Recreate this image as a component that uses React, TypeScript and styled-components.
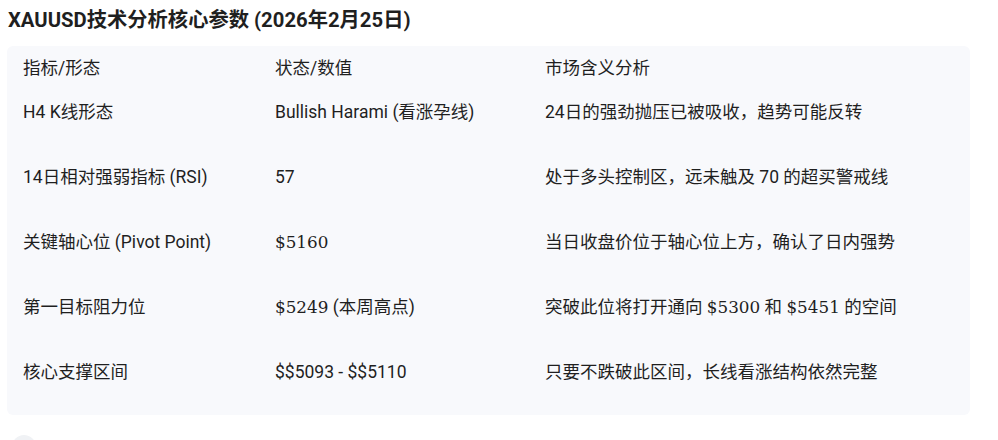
import React from 'react';
import styled, { createGlobalStyle } from 'styled-components';

const GlobalStyle = createGlobalStyle`
  html, body {
    margin: 0;
    padding: 0;
    background: #ffffff;
  }
  body {
    font-family: Roboto, "Noto Sans CJK SC", sans-serif;
    color: #1f1f1f;
  }
`;

const Page = styled.div`
  padding: 7px 28px 0 7px;
`;

const Title = styled.h3`
  margin: 0 0 0 1px;
  font-size: 20.3px;
  line-height: 26px;
  font-weight: 700;
  color: #1f1f1f;
`;

const Panel = styled.div`
  margin-top: 13px;
  background: #f8f9fc;
  border-radius: 6px;
  overflow: hidden;
`;

const Table = styled.table`
  width: 100%;
  border-collapse: collapse;
  table-layout: fixed;
`;

const Col = styled.col<{ w: number }>`
  width: ${({ w }) => w}px;
`;

const HeadCell = styled.th`
  text-align: left;
  font-weight: 400;
  font-size: 17.5px;
  line-height: 20px;
  padding: 12px 16px;
  vertical-align: top;
`;

const Cell = styled.td`
  font-size: 17.5px;
  line-height: 20px;
  padding: 12px 16px 33px;
  vertical-align: top;
`;

// dollar amounts come out of the math renderer in a serif face
const MathText = styled.span`
  && {
    font-family: "DejaVu Serif", "Liberation Serif", serif;
    font-size: 16.8px;
  }
`;

const Peek = styled.div`
  margin: 20px 0 0 5px;
  width: 24px;
  height: 12px;
  border-radius: 12px 12px 0 0;
  background: #f0f2f5;
`;

const rows: React.ReactNode[][] = [
  ['H4 K线形态', 'Bullish Harami (看涨孕线)', '24日的强劲抛压已被吸收，趋势可能反转'],
  ['14日相对强弱指标 (RSI)', '57', '处于多头控制区，远未触及 70 的超买警戒线'],
  ['关键轴心位 (Pivot Point)', <MathText>$5160</MathText>, '当日收盘价位于轴心位上方，确认了日内强势'],
  [
    '第一目标阻力位',
    <>
      <MathText>$5249</MathText> (本周高点)
    </>,
    <>
      突破此位将打开通向 <MathText>$5300</MathText> 和 <MathText>$5451</MathText> 的空间
    </>,
  ],
  ['核心支撑区间', '$$5093 - $$5110', '只要不跌破此区间，长线看涨结构依然完整'],
];

export default function App() {
  return (
    <Page>
      <GlobalStyle />
      <Title>XAUUSD技术分析核心参数 (2026年2月25日)</Title>
      <Panel>
        <Table>
          <colgroup>
            <Col w={252} />
            <Col w={270} />
            <Col w={441} />
          </colgroup>
          <thead>
            <tr>
              <HeadCell>指标/形态</HeadCell>
              <HeadCell>状态/数值</HeadCell>
              <HeadCell>市场含义分析</HeadCell>
            </tr>
          </thead>
          <tbody>
            {rows.map((r, i) => (
              <tr key={i}>
                {r.map((c, j) => (
                  <Cell key={j}>{c}</Cell>
                ))}
              </tr>
            ))}
          </tbody>
        </Table>
      </Panel>
      <Peek />
    </Page>
  );
}
